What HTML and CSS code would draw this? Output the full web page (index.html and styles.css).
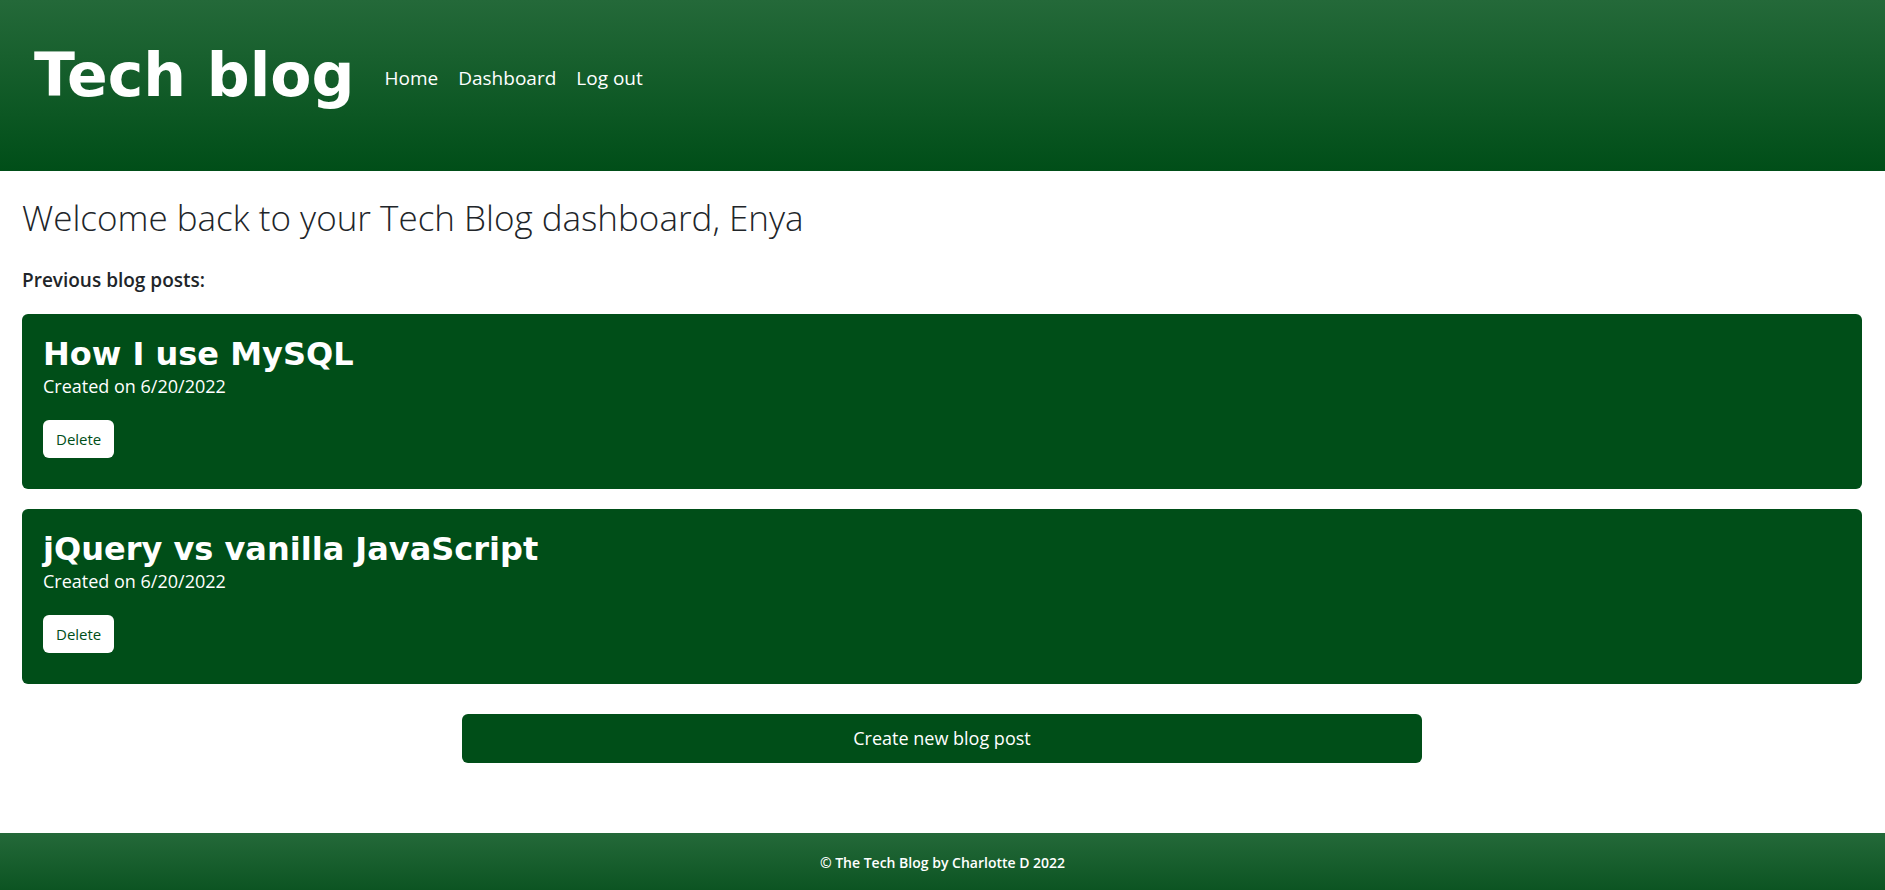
FILE: index.html
```html
<!DOCTYPE html>
<html lang="en">
<head>
<meta charset="utf-8">
<meta name="viewport" content="width=device-width, initial-scale=1">
<title>Tech blog</title>
<link rel="stylesheet" href="styles.css">
</head>
<body>
<header class="site-header">
  <h1 class="brand">Tech blog</h1>
  <nav class="site-nav">
    <a href="#">Home</a>
    <a href="#">Dashboard</a>
    <a href="#">Log out</a>
  </nav>
</header>
<main class="content">
  <h2 class="welcome">Welcome back to your Tech Blog dashboard, Enya</h2>
  <h3 class="section-title">Previous blog posts:</h3>
  <div class="posts">
    <article class="post">
      <h4 class="post-title">How I use MySQL</h4>
      <p class="post-date">Created on 6/20/2022</p>
      <button class="delete" type="button">Delete</button>
    </article>
    <article class="post">
      <h4 class="post-title">jQuery vs vanilla JavaScript</h4>
      <p class="post-date">Created on 6/20/2022</p>
      <button class="delete" type="button">Delete</button>
    </article>
  </div>
  <button class="create" type="button">Create new blog post</button>
</main>
<footer class="site-footer">
  <p class="copyright">© The Tech Blog by Charlotte D 2022</p>
</footer>
</body>
</html>
```
FILE: styles.css
```css
* {
  box-sizing: border-box;
}

body {
  --green: #004e18;
  --green-light: #246939;
  margin: 0;
  min-height: 100vh;
  display: flex;
  flex-direction: column;
  background: #fff;
  color: #212529;
  font-family: "Open Sans", "Noto Sans", sans-serif;
  font-size: 18px;
  line-height: 24px;
}

h1, h2, h3, h4, p {
  margin: 0;
}

button {
  border: 0;
  border-radius: 6px;
  font-family: inherit;
  cursor: pointer;
}

.site-header {
  display: flex;
  align-items: flex-start;
  gap: 30px;
  padding: 40px 34px 61px;
  background: linear-gradient(var(--green-light), var(--green));
  color: #fff;
}

.brand {
  font: bold 60px/70px "DejaVu Sans", sans-serif;
}

.site-nav {
  display: flex;
  gap: 20px;
  padding-top: 26px;
  font-size: 19px;
}

.site-nav a {
  color: inherit;
  text-decoration: none;
}

.content {
  flex: 1;
  display: flex;
  flex-direction: column;
  padding: 22px 23px 70px 22px;
}

.welcome {
  font-size: 35px;
  font-weight: 300;
  line-height: 50px;
}

.section-title {
  margin-top: 25px;
  font-size: 19px;
  font-weight: 600;
}

.posts {
  display: flex;
  flex-direction: column;
  gap: 20px;
  margin-top: 22px;
}

.post {
  padding: 22px 21px 31px;
  border-radius: 6px;
  background: var(--green);
  color: #fff;
}

.post-title {
  padding-bottom: 2px;
  font: bold 32px/36px "DejaVu Sans", sans-serif;
}

.post-date {
  margin-bottom: 22px;
}

.delete {
  display: block;
  padding: 7px 13px;
  background: #fff;
  color: var(--green);
  font-size: 15px;
  line-height: 24px;
}

.create {
  align-self: center;
  width: 100%;
  max-width: 960px;
  margin-top: 30px;
  padding: 12px;
  background: var(--green);
  color: #fff;
  font-size: 18px;
  line-height: 25px;
}

.site-footer {
  padding: 18px 22px 15px;
  background: linear-gradient(var(--green-light), #0c5422);
  color: #fff;
  text-align: center;
}

.copyright {
  font-size: 14px;
  font-weight: 600;
}
```
